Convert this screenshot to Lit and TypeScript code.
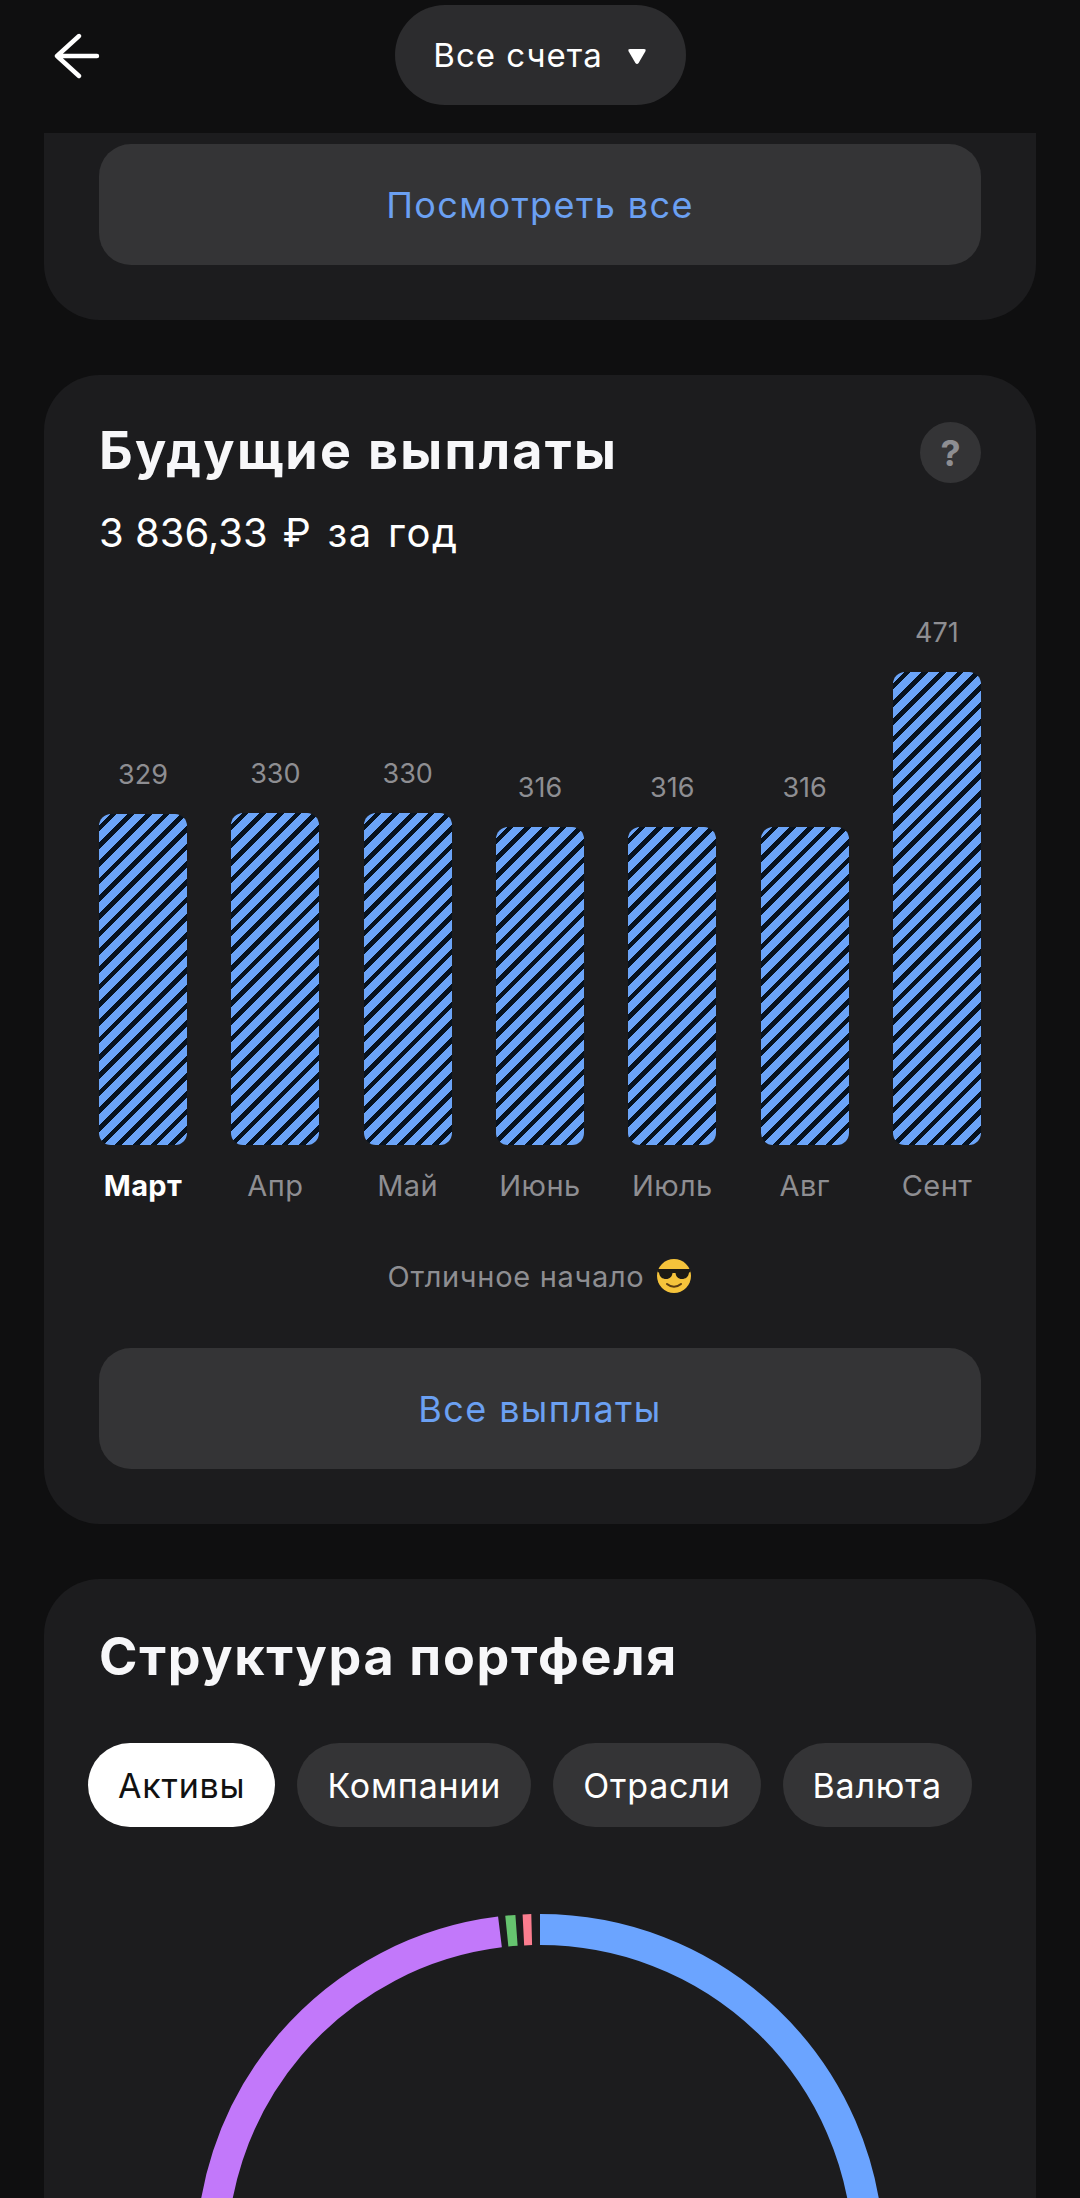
import { LitElement, html, css, svg } from 'lit';
import { customElement } from 'lit/decorators.js';

const MONTHS = [
  { name: 'Март', value: 329, current: true },
  { name: 'Апр', value: 330 },
  { name: 'Май', value: 330 },
  { name: 'Июнь', value: 316 },
  { name: 'Июль', value: 316 },
  { name: 'Авг', value: 316 },
  { name: 'Сент', value: 471 },
];

const CHIPS = ['Активы', 'Компании', 'Отрасли', 'Валюта'];

// Ring slices in degrees, clockwise from 12 o'clock.
const RING = [
  { from: 0, to: 175, color: '#6ba4ff' },
  { from: 182, to: 353, color: '#c278fa' },
  { from: 354.2, to: 355.9, color: '#66c46f' },
  { from: 357.1, to: 358.55, color: '#fb7d8f' },
];

function arc(from: number, to: number, r: number, c: number): string {
  const x = (a: number) => c + r * Math.sin((a * Math.PI) / 180);
  const y = (a: number) => c - r * Math.cos((a * Math.PI) / 180);
  const large = to - from > 180 ? 1 : 0;
  return `M${x(from)} ${y(from)}A${r} ${r} 0 ${large} 1 ${x(to)} ${y(to)}`;
}

@customElement('app-root')
export class AppRoot extends LitElement {
  static styles = css`
    :host {
      display: block;
      width: 1080px;
      height: 2198px;
      overflow: hidden;
      background: #0f0f10;
      color: #fff;
      font-family: 'Inter', 'Noto Sans', sans-serif;
    }
    .top {
      height: 133px;
      display: grid;
      grid-template-columns: 1fr auto 1fr;
      align-items: start;
    }
    .back {
      margin: 32px 0 0 54px;
      width: 48px;
      height: 48px;
      display: block;
    }
    .account {
      margin-top: 5px;
      width: 291px;
      height: 100px;
      border-radius: 50px;
      background: #2c2c2e;
      display: flex;
      align-items: center;
      justify-content: center;
      gap: 24px;
      font-size: 33px;
      letter-spacing: 1px;
    }
    .account svg {
      display: block;
      margin-top: 2px;
    }
    .card {
      margin: 0 44px 55px;
      padding: 0 55px 55px;
      background: #1c1c1e;
      border-radius: 56px;
    }
    .card.cut {
      padding-top: 11px;
      border-radius: 0 0 56px 56px;
    }
    .wide {
      height: 121px;
      border-radius: 32px;
      background: #343436;
      color: #6ba0f2;
      font-size: 36px;
      letter-spacing: 1.4px;
      display: flex;
      align-items: center;
      justify-content: center;
    }
    .head {
      padding-top: 47px;
      display: flex;
      justify-content: space-between;
      align-items: flex-start;
    }
    .head.low {
      padding-top: 48px;
    }
    h2 {
      margin: 0;
      font-size: 52px;
      line-height: 60px;
      font-weight: 700;
      letter-spacing: 1.7px;
      color: #f7f7f9;
    }
    .lift {
      margin-top: -1px;
      letter-spacing: 2.3px;
    }
    .help {
      width: 61px;
      height: 61px;
      border-radius: 50%;
      background: #343436;
      color: #8e8e92;
      font-size: 36px;
      font-weight: 700;
      display: flex;
      align-items: center;
      justify-content: center;
    }
    .sum {
      margin-top: 25px;
      font-size: 40px;
      line-height: 50px;
      word-spacing: 2px;
      letter-spacing: 1.7px;
    }
    .amt {
      word-spacing: 0;
      letter-spacing: 0;
    }
    .chart {
      margin-top: 55px;
      display: flex;
      justify-content: space-between;
      align-items: flex-end;
    }
    .col {
      width: 88px;
      display: flex;
      flex-direction: column;
      align-items: center;
    }
    .val {
      font-size: 27px;
      line-height: 40px;
      margin-bottom: 19px;
      color: #8e8e92;
    }
    .bar {
      width: 88px;
      border-radius: 12px;
      background: repeating-linear-gradient(
        135deg,
        #6ba4f8 0 7.8px,
        #07121f 7.8px 12.5px
      );
    }
    .mon {
      margin-top: 21px;
      font-size: 29px;
      line-height: 40px;
      letter-spacing: 0.4px;
      color: #8e8e92;
      white-space: nowrap;
    }
    .mon.on {
      color: #fff;
      font-weight: 700;
    }
    .note {
      margin: 50px 0 52px;
      height: 40px;
      font-size: 29px;
      letter-spacing: 0.7px;
      color: #8e8e92;
      display: flex;
      align-items: center;
      justify-content: center;
      gap: 12px;
    }
    .note svg {
      display: block;
    }
    .chips {
      margin: 56px 0 87px -11px;
      display: flex;
      gap: 22px;
    }
    .chip {
      height: 84px;
      padding: 0 30px;
      border-radius: 42px;
      background: #343436;
      font-size: 34px;
      letter-spacing: 0.8px;
      display: flex;
      align-items: center;
      white-space: nowrap;
    }
    .chip.on {
      background: #fff;
      color: #111;
    }
    .ring {
      display: block;
      margin: 0 auto;
    }
  `;

  render() {
    return html`
      <div class="top">
        <svg class="back" viewBox="0 0 48 48" fill="none" stroke="#fff" stroke-width="4.4" stroke-linecap="round" stroke-linejoin="round">
          <path d="M43 24H4M25 4 3 24l22 20" />
        </svg>
        <div class="account">
          <span>Все счета</span>
          <svg width="20" height="17" viewBox="0 0 20 17"><path d="M3 1h14q2.500 0 1.300 2.400L11.600 15q-1.600 2-3.200 0L1.700 3.400Q.500 1 3 1z" fill="#fff" /></svg>
        </div>
        <div></div>
      </div>

      <section class="card cut">
        <div class="wide">Посмотреть все</div>
      </section>

      <section class="card">
        <div class="head">
          <h2 class="lift">Будущие выплаты</h2>
          <div class="help">?</div>
        </div>
        <div class="sum"><span class="amt">3 836,33</span> ₽ за год</div>
        <div class="chart">
          ${MONTHS.map(
            (m) => html`
              <div class="col">
                <div class="val">${m.value}</div>
                <div class="bar" style="height:${Math.round(m.value * 1.005)}px"></div>
                <div class="mon ${m.current ? 'on' : ''}">${m.name}</div>
              </div>
            `,
          )}
        </div>
        <div class="note">
          <span>Отличное начало</span>
          <svg width="36" height="36" viewBox="0 0 36 36">
            <circle cx="18" cy="18" r="17" fill="#f5c33b" />
            <path d="M1.500 11h33v3l-1.500.5c-.5 4.500-3.500 6.500-7 6.500-4 0-6-2.500-6.500-6h-3c-.5 3.500-2.500 6-6.500 6-3.500 0-6.500-2-7-6.500L1.500 14z" fill="#1d1a14" />
            <path d="M11 26c4 3.500 10 3.500 14 0" fill="none" stroke="#5b3c12" stroke-width="2" stroke-linecap="round" />
          </svg>
        </div>
        <div class="wide">Все выплаты</div>
      </section>

      <section class="card">
        <div class="head low"><h2>Структура портфеля</h2></div>
        <div class="chips">
          ${CHIPS.map((c, i) => html`<div class="chip ${i === 0 ? 'on' : ''}">${c}</div>`)}
        </div>
        <svg class="ring" width="688" height="688" viewBox="0 0 688 688" fill="none" stroke-width="31">
          ${RING.map((s) => svg`<path d=${arc(s.from, s.to, 328.5, 344)} stroke=${s.color} />`)}
        </svg>
      </section>
    `;
  }
}
